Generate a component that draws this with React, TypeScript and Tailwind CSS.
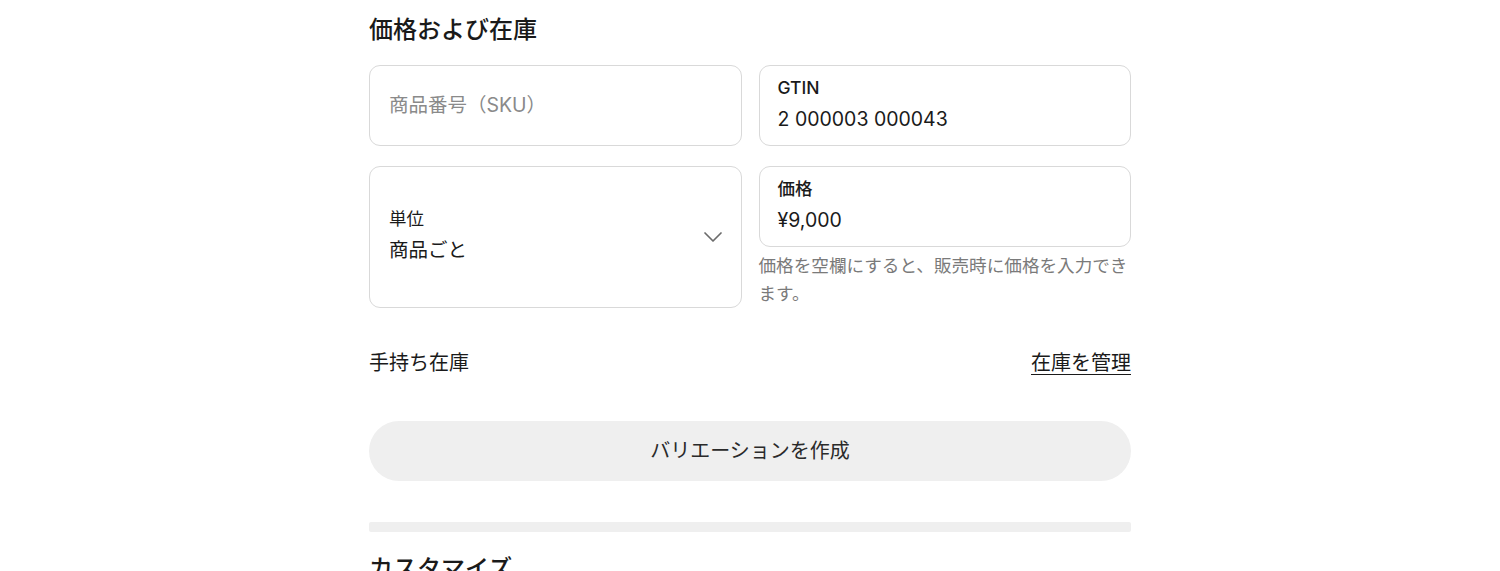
import { ChevronDown } from 'lucide-react'

const font = { fontFamily: 'Inter, "Noto Sans CJK JP", sans-serif' }

function FieldBox({ label, value }: { label: string; value: string }) {
  return (
    <div className="flex h-[81px] flex-col justify-center rounded-[11px] border border-[#d9d9d9] px-[18px]">
      <span className="text-[17.5px] leading-[22px] font-medium text-[#1a1a1a]">{label}</span>
      <span className="mt-[4px] text-[19.5px] leading-[32px] text-[#1a1a1a]">{value}</span>
    </div>
  )
}

export default function App() {
  return (
    <div className="min-h-screen bg-white" style={font}>
      <div className="mx-auto w-[762px] pt-[14px]">
        <h2 className="text-[24px] leading-[32px] font-medium text-[#1a1a1a]">価格および在庫</h2>

        <div className="mt-[19px] grid grid-cols-2 gap-x-[17px] gap-y-[20px]">
          <div className="flex h-[81px] items-center rounded-[11px] border border-[#d9d9d9] px-[19px]">
            <span className="text-[19.5px] text-[#8a8a8a]">商品番号（SKU）</span>
          </div>
          <FieldBox label="GTIN" value="2 000003 000043" />

          <div className="flex items-center justify-between rounded-[11px] border border-[#d9d9d9] pl-[19px] pr-[12px]">
            <div className="flex flex-col">
              <span className="text-[17.5px] leading-[22px] text-[#1a1a1a]">単位</span>
              <span className="mt-[4px] text-[19.5px] leading-[32px] text-[#1a1a1a]">商品ごと</span>
            </div>
            <ChevronDown size={32} strokeWidth={1.3} className="text-[#6b6b6b]" />
          </div>
          <div className="flex flex-col">
            <FieldBox label="価格" value="¥9,000" />
            <p className="mt-[5px] text-[17.6px] leading-[28px] text-[#7a7a7a]">
              価格を空欄にすると、販売時に価格を入力できます。
            </p>
          </div>
        </div>

        <div className="mt-[41px] flex items-center justify-between text-[20px] leading-[28px] text-[#1a1a1a]">
          <span>手持ち在庫</span>
          <a className="underline underline-offset-[4px] decoration-[1px]" href="#">在庫を管理</a>
        </div>

        <button className="mt-[44px] flex h-[60px] w-full items-center justify-center rounded-full bg-[#efefef] text-[20px] text-[#2a2a2a]">
          バリエーションを作成
        </button>

        <div className="mt-[41px] h-[10px] w-full rounded-[2px] bg-[#efefef]" />

        <h2 className="mt-[21px] text-[24px] leading-[32px] font-medium text-[#1a1a1a]">カスタマイズ</h2>
      </div>
    </div>
  )
}
